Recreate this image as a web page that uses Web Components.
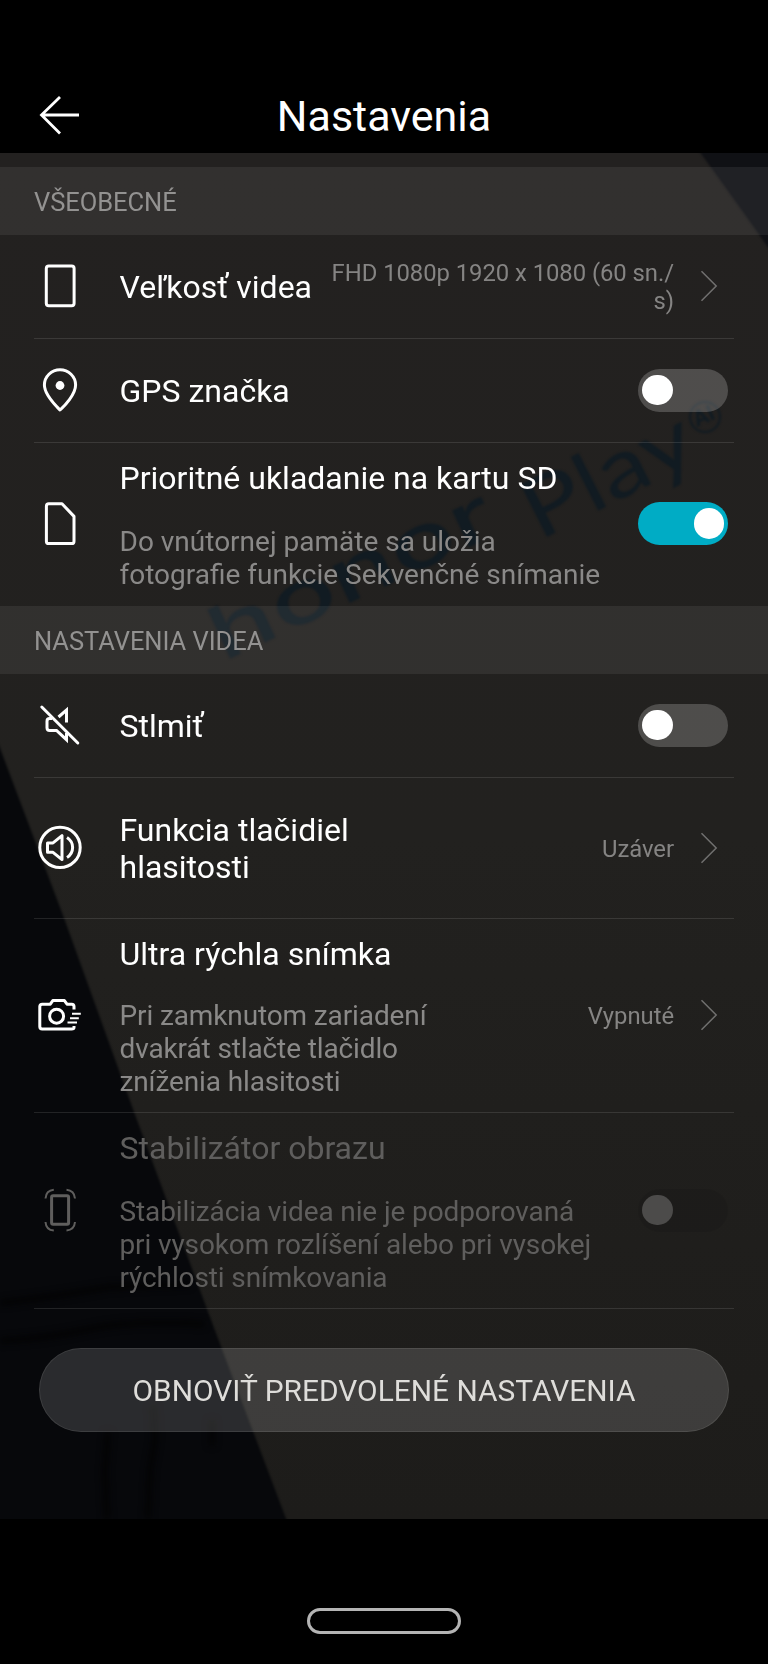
<!DOCTYPE html>
<html lang="sk">
<head>
<meta charset="utf-8">
<title>Nastavenia</title>
<style>
html,body{margin:0;background:#000}
body{font-family:Roboto,"Noto Sans",sans-serif;color:#fff;width:768px;height:1664px;overflow:hidden}
</style>
</head>
<body>
<settings-screen></settings-screen>
<script>
const define = (name, html, setup) => {
  const t = document.createElement('template');
  t.innerHTML = html;
  customElements.define(name, class extends HTMLElement {
    constructor() {
      super();
      this.attachShadow({mode: 'open'}).append(t.content.cloneNode(true));
    }
    connectedCallback() { if (setup) setup(this, this.shadowRoot); }
  });
};

const ICONS = {
  frame: '<rect x="10.3" y="3.9" width="27.8" height="39.8" rx="2.5"/>',
  pin: '<path d="M24 44C20 40 8.400 28.500 8.400 19a15.600 15.200 0 0 1 31.200 0C39.600 28.500 28.400 40 24 44z"/><circle cx="24" cy="19.500" r="4.400" fill="currentColor" stroke="none"/>',
  card: '<path d="M12.800 3.800h13.200L38 16.400V41.200q0 2.400-2.400 2.400H12.800q-2.400 0-2.400-2.400V6.200Q10.400 3.800 12.800 3.800z"/>',
  mute: '<path d="M5.800 6 41.800 42" stroke-linecap="round"/><path d="M30.500 21.500V9l-8 7M16 17.500h-2.300q-2.700 0-2.700 2.700v6.500q0 2.700 2.700 2.700H20.500L30.500 38.700V32" stroke-linejoin="miter"/>',
  volume: '<circle cx="24" cy="23.400" r="20.200"/><path d="M11.500 18.900h5.500l9-7.300v24l-9-7.300h-5.500z"/><path d="M31 13.500q5.600 3.600 5.600 10T31 33.500"/>',
  camera: '<path d="M38 18.500V15.500q0-2.300-2.300-2.300H31l-2.600-3.600H16.800l-2.500 3.600H6.200Q3.800 13.200 3.800 15.600V35.600Q3.800 38 6.200 38H35.600Q38 38 38 36.500V35"/><circle cx="20.600" cy="25.200" r="7"/><path d="M36 22.800h8.800M34 27.200h8.800M31.500 31.600h9.500" stroke-width="2"/>',
  steady: '<rect x="15.600" y="9.700" width="17" height="28.600" rx="1.500"/><path d="M9.500 12.500Q10 4.500 17.800 3.800M30.500 3.800Q38.300 4.500 39 12.500M9.500 36Q10 44 17.800 44.500M30.500 44.500Q38.300 44 39 36" stroke-width="2"/>'
};

define('line-icon', `<style>
:host{display:block;width:48px;height:48px}
svg{display:block;fill:none;stroke:currentColor;stroke-width:3;stroke-linejoin:round}
</style><svg width="48" height="48" viewBox="0 0 48 48" aria-hidden="true"></svg>`,
(el, root) => { root.querySelector('svg').innerHTML = ICONS[el.getAttribute('name')]; });

define('toggle-switch', `<style>
:host{display:flex;box-sizing:border-box;width:90px;height:43px;border-radius:21.500px;background:rgba(255,255,255,.2);padding:6px 4px;justify-content:flex-start}
:host([on]){background:#00acc5;justify-content:flex-end}
:host([disabled]){background:rgba(0,0,0,.07)}
i{display:block;width:30.500px;height:30.500px;border-radius:50%;background:#fff}
:host([disabled]) i{background:#4c4b4a}
</style><i></i>`);

define('chevron-next', `<style>:host{display:block;width:18px;height:32px;margin-right:10px}svg{display:block}</style>
<svg width="18" height="32" viewBox="0 0 18 32" aria-hidden="true"><path d="M1.500 1.200 16.200 16 1.500 30.800" fill="none" stroke="#71706f" stroke-width="1.500"/></svg>`);

define('title-bar', `<style>
:host{display:grid;grid-template-columns:120px 1fr 120px;height:153px;background:#000;box-sizing:border-box;padding-top:78px}
svg{display:block;margin:18px 0 0 39px}
h1{margin:13px 0 0;text-align:center;font-weight:400;font-size:43px;line-height:51px}
</style>
<svg width="42" height="40" viewBox="0 0 42 40" aria-hidden="true"><path d="M40 19H3M21 1 2.500 19 21 37.500" fill="none" stroke="#fff" stroke-width="2.800"/></svg>
<h1><slot></slot></h1>`);

define('section-head', `<style>
:host{display:flex;align-items:center;box-sizing:border-box;height:68px;padding:2px 34px 0;background:rgba(255,255,255,.07);color:#939291;font-size:25.500px;line-height:30px;letter-spacing:-.05px}
</style><slot></slot>`);

define('setting-row', `<style>
:host{display:flex;align-items:center;box-sizing:border-box;margin:0 34px;padding-left:2px;border-bottom:1.500px solid rgba(255,255,255,.11);position:relative}
:host([last]){border-bottom-color:transparent}
.body{flex:none;margin-left:35.500px;padding-top:3.500px}
.label{font-size:32px;line-height:37.500px;white-space:nowrap}
.desc{display:none;font-size:28px;line-height:32.900px;letter-spacing:var(--track,0);color:#8a8988;white-space:nowrap}
:host([described]) .body{align-self:flex-start;padding-top:17.200px}
:host([described]) .desc{display:block;margin-top:var(--gap,28.500px)}
.value{flex:1;text-align:right;font-size:23.850px;letter-spacing:-.05px;line-height:28px;color:#858483;white-space:nowrap;padding-top:var(--drop,2.500px)}
.end{flex:none;margin-left:26px;margin-right:6px}
:host([disabled]) line-icon,:host([disabled]) .label,:host([disabled]) .desc{color:#5f5e5d}
</style>
<line-icon></line-icon>
<div class="body"><div class="label"><slot></slot></div><div class="desc"><slot name="desc"></slot></div></div>
<div class="value"><slot name="value"></slot></div>
<div class="end"><slot name="end"></slot></div>`,
(el, root) => {
  const icon = document.createElement('line-icon');
  icon.setAttribute('name', el.getAttribute('icon'));
  root.querySelector('line-icon').replaceWith(icon);
});

define('pill-button', `<style>
:host{display:block;margin:39px 39px 0}
button{display:block;width:100%;height:84px;box-sizing:border-box;border:1.500px solid rgba(255,255,255,.09);border-radius:42px;background:rgba(255,255,255,.145);color:#deddda;font:400 29.900px/36px Roboto,sans-serif;padding:2px 0 0;white-space:nowrap}
</style><button><slot></slot></button>`);

define('wall-backdrop', `<style>
:host{display:block;position:absolute;inset:0}svg{display:block}
</style>
<svg width="768" height="1366" viewBox="0 153 768 1366" aria-hidden="true">
<defs>
<linearGradient id="wall" x1="0" y1="0" x2="0" y2="1"><stop offset="0" stop-color="#232120"/><stop offset=".5" stop-color="#22211f"/><stop offset="1" stop-color="#1d1c1a"/></linearGradient>
<filter id="soft" x="-10%" y="-10%" width="120%" height="120%" color-interpolation-filters="sRGB"><feGaussianBlur stdDeviation="1"/></filter>
<filter id="seam" x="-10%" y="-50%" width="120%" height="200%" color-interpolation-filters="sRGB"><feGaussianBlur stdDeviation="3"/></filter>
</defs>
<rect y="153" width="768" height="1366" fill="url(#wall)"/>
<g filter="url(#soft)">
<path d="M697 148 775 257V148z" fill="#101115"/>
<path d="M-5 735 64 918 134 1112 211 1320 288 1524H-5z" fill="#07080b"/>
</g>
<g filter="url(#seam)" fill="none" stroke="#030304" stroke-width="6">
<path d="M0 1303Q60 1296 110 1287L190 1284M0 1341Q50 1338 90 1329T205 1324M108 1432 105 1470 107 1519M153 1405 155 1440 150 1470 148 1519M212 1420V1446"/>
</g>
<g filter="url(#soft)" fill="#111b22">
<text transform="translate(223 662) rotate(-25)" font-family="Inter" font-size="74" font-weight="500" textLength="306" lengthAdjust="spacingAndGlyphs">honor</text>
<text transform="translate(539 541) rotate(-27)" font-family="Lato" font-size="82" font-weight="400" textLength="182" lengthAdjust="spacingAndGlyphs">Play</text>
<text transform="translate(697 427) rotate(-24)" font-family="Roboto" font-size="22" font-weight="700">AI</text>
<circle cx="705" cy="417" r="15" fill="none" stroke="#111b22" stroke-width="2"/>
</g>
</svg>`);

define('home-bar', `<style>
:host{display:flex;justify-content:center;box-sizing:border-box;height:145px;padding-top:89px;background:#000}
i{display:block;box-sizing:border-box;width:154px;height:26px;border:3px solid #b4b4b4;border-radius:13px}
</style><i></i>`);

define('settings-screen', `<style>
:host{display:block;width:768px}
main{position:relative;height:1366px}
.list{position:relative;padding-top:13.600px}
</style>
<title-bar>Nastavenia</title-bar>
<main><wall-backdrop></wall-backdrop><div class="list">
<section-head>VŠEOBECNÉ</section-head>
<setting-row icon="frame" style="height:104px">Veľkosť videa<span slot="value">FHD 1080p 1920 x 1080 (60 sn./<br>s)</span><chevron-next slot="end"></chevron-next></setting-row>
<setting-row icon="pin" style="height:104px">GPS značka<toggle-switch slot="end"></toggle-switch></setting-row>
<setting-row icon="card" described last style="height:163px">Prioritné ukladanie na kartu SD<span slot="desc">Do vnútornej pamäte sa uložia<br>fotografie funkcie Sekvenčné snímanie</span><toggle-switch slot="end" on></toggle-switch></setting-row>
<section-head>NASTAVENIA VIDEA</section-head>
<setting-row icon="mute" style="height:104px">Stlmiť<toggle-switch slot="end"></toggle-switch></setting-row>
<setting-row icon="volume" style="height:141px">Funkcia tlačidiel<br>hlasitosti<span slot="value">Uzáver</span><chevron-next slot="end"></chevron-next></setting-row>
<setting-row icon="camera" described style="height:194px;--gap:26.600px;--drop:2px;--track:-.12px">Ultra rýchla snímka<span slot="desc">Pri zamknutom zariadení<br>dvakrát stlačte tlačidlo<br>zníženia hlasitosti</span><span slot="value">Vypnuté</span><chevron-next slot="end"></chevron-next></setting-row>
<setting-row icon="steady" described disabled style="height:196px;--track:-.12px">Stabilizátor obrazu<span slot="desc">Stabilizácia videa nie je podporovaná<br>pri vysokom rozlíšení alebo pri vysokej<br>rýchlosti snímkovania</span><toggle-switch slot="end" disabled></toggle-switch></setting-row>
<pill-button>OBNOVIŤ PREDVOLENÉ NASTAVENIA</pill-button>
</div></main>
<home-bar></home-bar>`);
</script>
</body>
</html>
